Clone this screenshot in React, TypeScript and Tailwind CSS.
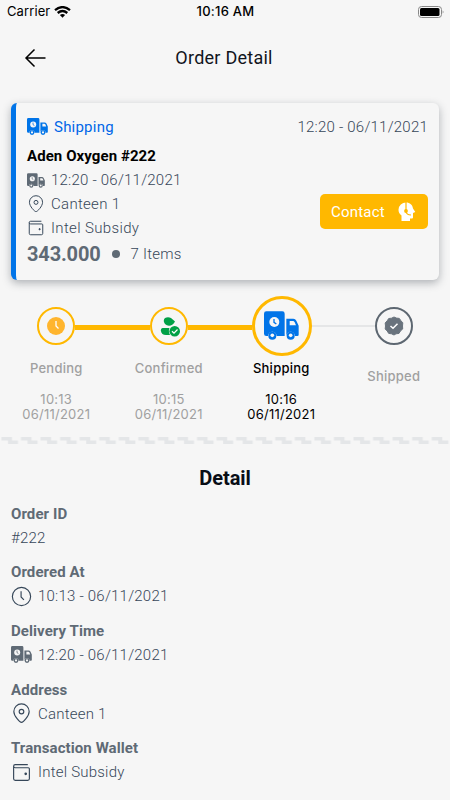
import React from "react";

type IconProps = { className?: string };

function Truck({ className }: IconProps) {
  return (
    <svg viewBox="0 0 105 85" className={className} fill="currentColor">
      <path d="M7 0H55Q62 0 62 7V74H38A13 13 0 0 0 12 74H7Q0 74 0 67V7Q0 0 7 0Z" />
      <circle cx="25" cy="73" r="12" />
      <circle cx="25" cy="72" r="5.500" fill="#f6f6f6" />
      <path d="M67 22H88Q94 22 97 28L104 43V70Q104 74 100 74H93A13 13 0 0 0 67 74Z" />
      <path d="M77 29H87Q90 29 92 33L96 42H77Z" fill="#f6f6f6" />
      <circle cx="80" cy="73" r="12" />
      <circle cx="80" cy="72" r="5.500" fill="#f6f6f6" />
      <circle cx="31" cy="32" r="15" fill="#f6f6f6" />
      <path d="M30 23V33L37 38" fill="none" stroke="currentColor" strokeWidth="4" />
    </svg>
  );
}

function Pin({ className }: IconProps) {
  return (
    <svg viewBox="0 0 20 20" className={className} fill="none" stroke="currentColor" strokeWidth="1.100">
      <path d="M10 18.500C8.500 18.500 2.700 12.500 2.700 8.100A7.300 7.300 0 0 1 17.300 8.100C17.300 12.500 11.500 18.500 10 18.500Z" />
      <circle cx="10" cy="8.200" r="2.200" />
    </svg>
  );
}

function Wallet({ className }: IconProps) {
  return (
    <svg viewBox="0 0 20 20" className={className} fill="none" stroke="currentColor" strokeWidth="1.100">
      <path d="M16 2.500H4A1.500 1.500 0 0 0 4 5.500H16.500Q17.500 5.500 17.500 6.500V16Q17.500 17.500 16 17.500H4Q2.500 17.500 2.500 16V4" />
      <circle cx="14" cy="11.300" r="0.700" fill="currentColor" />
    </svg>
  );
}

function Clock({ className }: IconProps) {
  return (
    <svg viewBox="0 0 20 20" className={className} fill="none" stroke="currentColor" strokeWidth="1.100">
      <circle cx="10" cy="10" r="8.700" />
      <path d="M9.600 5V10.500L12.300 13.200" />
    </svg>
  );
}

function Support({ className }: IconProps) {
  return (
    <svg viewBox="0 0 18 20" className={className}>
      <path d="M3.500 19V13.500C1.500 12 .5 10 .5 7.700A7.500 7.500 0 0 1 8 .5C12 .5 14.500 3 15 6.500L17.300 10L15 11V15.500Q15 16.500 14 16.500H12V19Z" fill="#fff" />
      <path d="M8 0V8" stroke="#ffb800" strokeWidth="1.200" />
      <circle cx="8" cy="9" r="1.900" fill="#ffb800" />
      <path d="M8 9.500Q8.500 13 13 13" stroke="#ffb800" strokeWidth="1.200" fill="none" />
    </svg>
  );
}

function StatusBar() {
  return (
    <header className="grid h-[23px] grid-cols-[1fr_auto_1fr] items-center pr-1.5 pl-[7px] font-['Inter','Liberation_Sans',sans-serif] text-[13px] text-black">
      <div className="flex items-center gap-1">
        <span className="tracking-[0.100px]">Carrier</span>
        <svg viewBox="0 0 17 12" className="h-3 w-[17px]" fill="none" stroke="#000" strokeWidth="2.300">
          <path d="M1 4.200Q8.500 -2 16 4.200M3.700 7Q8.500 3 13.300 7" />
          <path d="M8.500 11.700L5.900 9.100Q8.500 7 11.100 9.100Z" fill="#000" stroke="none" />
        </svg>
      </div>
      <span className="font-medium tracking-[0.250px]">10:16 AM</span>
      <svg viewBox="0 0 27 12" className="h-3 w-[27px] justify-self-end">
        <rect x="1.500" y=".5" width="23" height="11" rx="3" fill="none" stroke="#888" />
        <rect x="3" y="2" width="19.500" height="8" rx="1.500" fill="#000" />
        <path d="M25.700 4.500Q27.300 6 25.700 7.500Z" fill="#888" />
      </svg>
    </header>
  );
}

function Step({ children, tone }: { children: React.ReactNode; tone: "done" | "next" }) {
  return (
    <div className={`flex size-[38px] shrink-0 items-center justify-center rounded-full border-2 ${tone === "done" ? "border-[#ffb800]" : "border-[#5d6771]"}`}>
      {children}
    </div>
  );
}

const steps = [
  { label: "Pending", time: "10:13", style: "text-[#a0a0a0]" },
  { label: "Confirmed", time: "10:15", style: "text-[#a0a0a0]" },
  { label: "Shipping", time: "10:16", style: "text-black" },
  { label: "Shipped", time: "", style: "pt-2 text-[#a0a0a0]" },
];

function Progress() {
  return (
    <section className="mt-[15px]">
      <div className="flex h-[61px] items-center pr-[37px] pl-[37px]">
        <Step tone="done">
          <svg viewBox="0 0 18 18" className="size-[18px]">
            <circle cx="9" cy="9" r="9" fill="#ffb52e" />
            <path d="M9 4V9L11.500 11.500" stroke="#fff" strokeWidth="1.300" fill="none" />
          </svg>
        </Step>
        <div className="mt-[3px] h-[5px] w-[75px] bg-[#ffb800]" />
        <Step tone="done">
          <svg viewBox="0 0 20 20" className="mt-0.5 ml-0.5 size-5" fill="#00a046">
            <path d="M5 1Q8 -.7 11 1L15 4.500Q12.500 8.800 9 8.800C5 8.800 2 4 5 1Z" />
            <path d="M2.500 11H9.500Q8 14 10 18H6Q1.500 18 .8 13.500Q.8 11 2.500 11Z" />
            <circle cx="14.700" cy="14.300" r="5.300" />
            <path d="M12 14.300L14 16.200L17.500 12.500" stroke="#fff" strokeWidth="1.200" fill="none" />
          </svg>
        </Step>
        <div className="mt-[3px] h-[5px] flex-1 bg-[#ffb800]" />
        <div className="flex size-[60px] shrink-0 items-center justify-center rounded-full border-3 border-[#ffb800]">
          <Truck className="h-[29px] w-[35px] text-[#0074e8]" />
        </div>
        <div className="h-0.5 flex-1 bg-[#e5e6e7]" />
        <Step tone="next">
          <svg viewBox="0 0 20 20" className="size-5">
            <path d="M10 1L12.500 2.100L15.300 2.400L16.900 4.700L18.800 6.800L18.500 10L18.700 13L16.400 15L15 17.400L12 17.800L10 19L7.500 17.800L4.700 17.400L3.200 15L1.200 13L1.500 10L1.200 7L3.200 4.800L4.700 2.500L7.500 2.200Z" fill="#69737d" stroke="#69737d" strokeLinejoin="round" />
            <path d="M6.500 10L9 12.300L13.500 7.700" stroke="#fff" strokeWidth="1.500" fill="none" />
          </svg>
        </Step>
      </div>
      <div className="grid h-[68px] grid-cols-4 pt-[5px] text-center font-['Inter','Liberation_Sans',sans-serif] text-[13px] leading-[15.500px] tracking-[0.250px]">
        {steps.map((s) => (
          <div key={s.label} className={s.style}>
            <div className="font-medium">{s.label}</div>
            {s.time && <div className="mt-[15px]">{s.time}<br />06/11/2021</div>}
          </div>
        ))}
      </div>
    </section>
  );
}

const details = [
  { label: "Order ID", value: "#222", icon: null },
  { label: "Ordered At", value: "10:13 - 06/11/2021", icon: <Clock className="size-[21px]" /> },
  { label: "Delivery Time", value: "12:20 - 06/11/2021", icon: <Truck className="h-[17px] w-[21px] text-[#5f6a75]" /> },
  { label: "Address", value: "Canteen 1", icon: <Pin className="size-[21px]" /> },
  { label: "Transaction Wallet", value: "Intel Subsidy", icon: <Wallet className="size-[21px]" /> },
];

export default function App() {
  return (
    <main className="h-[800px] w-[450px] overflow-hidden bg-[#f6f6f6] font-['Roboto','Liberation_Sans',sans-serif] text-[#5f6a75]">
      <StatusBar />
      <nav className="grid h-[70px] grid-cols-[1fr_auto_1fr] items-center px-6">
        <svg viewBox="0 0 22 20" className="h-5 w-[22px]" fill="none" stroke="#000" strokeWidth="1.500">
          <path d="M10.500 1.500L2 10L10.500 18.500M2 10H21.500" />
        </svg>
        <h1 className="-ml-0.5 text-lg tracking-[0.250px] text-[#11151c]">Order Detail</h1>
      </nav>

      <section className="mt-2.5 mr-[11px] ml-[11px] flex h-[177px] justify-between rounded-md border-l-5 border-[#0074e8] bg-[#f6f6f6] pt-3 pr-[11px] pl-[11px] shadow-[0_3px_9px_rgba(40,50,60,0.350)]">
        <div className="text-[15px] leading-6 tracking-[0.220px]">
          <div className="flex items-center gap-1.5 text-[#0066e8]">
            <Truck className="mb-0.5 h-[17px] w-[21px] text-[#0074e8]" />Shipping
          </div>
          <div className="mt-[5px] font-bold tracking-[0.080px] text-black">Aden Oxygen #222</div>
          <div className="flex items-center gap-1.5 font-light text-[#364759]"><Truck className="h-[15px] w-[18px] text-[#5f6a75]" />12:20 - 06/11/2021</div>
          <div className="flex items-center gap-1.5 font-light tracking-[0.300px] text-[#364759]"><Pin className="size-[18px]" />Canteen 1</div>
          <div className="flex items-center gap-1.5 font-light tracking-[0.350px] text-[#364759]"><Wallet className="size-[18px]" />Intel Subsidy</div>
          <div className="flex h-[27px] items-center">
            <b className="text-xl tracking-[-0.150px]">343.000</b>
            <span className="ml-[11px] size-2 rounded-full bg-current" />
            <span className="ml-[11px] font-light text-[#364759]">7 Items</span>
          </div>
        </div>
        <div className="flex flex-col items-end">
          <span className="text-[15px] leading-6 font-light tracking-[0.220px] text-[#364759]">12:20 - 06/11/2021</span>
          <button className="mt-[55px] flex h-[35px] w-[108px] items-center justify-between rounded-[5px] bg-[#ffb800] pt-px pr-3 pl-[11px] text-[15px] tracking-[0.200px] text-white">
            Contact<Support className="h-5 w-[18px]" />
          </button>
        </div>
      </section>

      <Progress />

      <svg className="mt-[13px] block h-2 w-full" viewBox="0 0 450 8">
        <defs>
          <pattern id="dash" width="19.560" height="8" patternUnits="userSpaceOnUse">
            <path d="M1.400 0H12V3.500H18V7H8V3.500H1.400Z" fill="#e4e6e8" />
          </pattern>
        </defs>
        <rect width="450" height="8" fill="url(#dash)" />
      </svg>

      <section className="px-[11px] pt-[21px]">
        <h2 className="text-center text-xl leading-6 font-bold tracking-[-0.100px] text-[#090d16]">Detail</h2>
        <dl className="mt-[11.500px] text-[15px] tracking-[0.220px]">
          {details.map((d) => (
            <div key={d.label} className="h-[58.700px] leading-6">
              <dt className="font-bold tracking-[0.080px]">{d.label}</dt>
              <dd className="flex items-center gap-1.5 font-light text-[#364759]">{d.icon}{d.value}</dd>
            </div>
          ))}
        </dl>
      </section>
    </main>
  );
}
